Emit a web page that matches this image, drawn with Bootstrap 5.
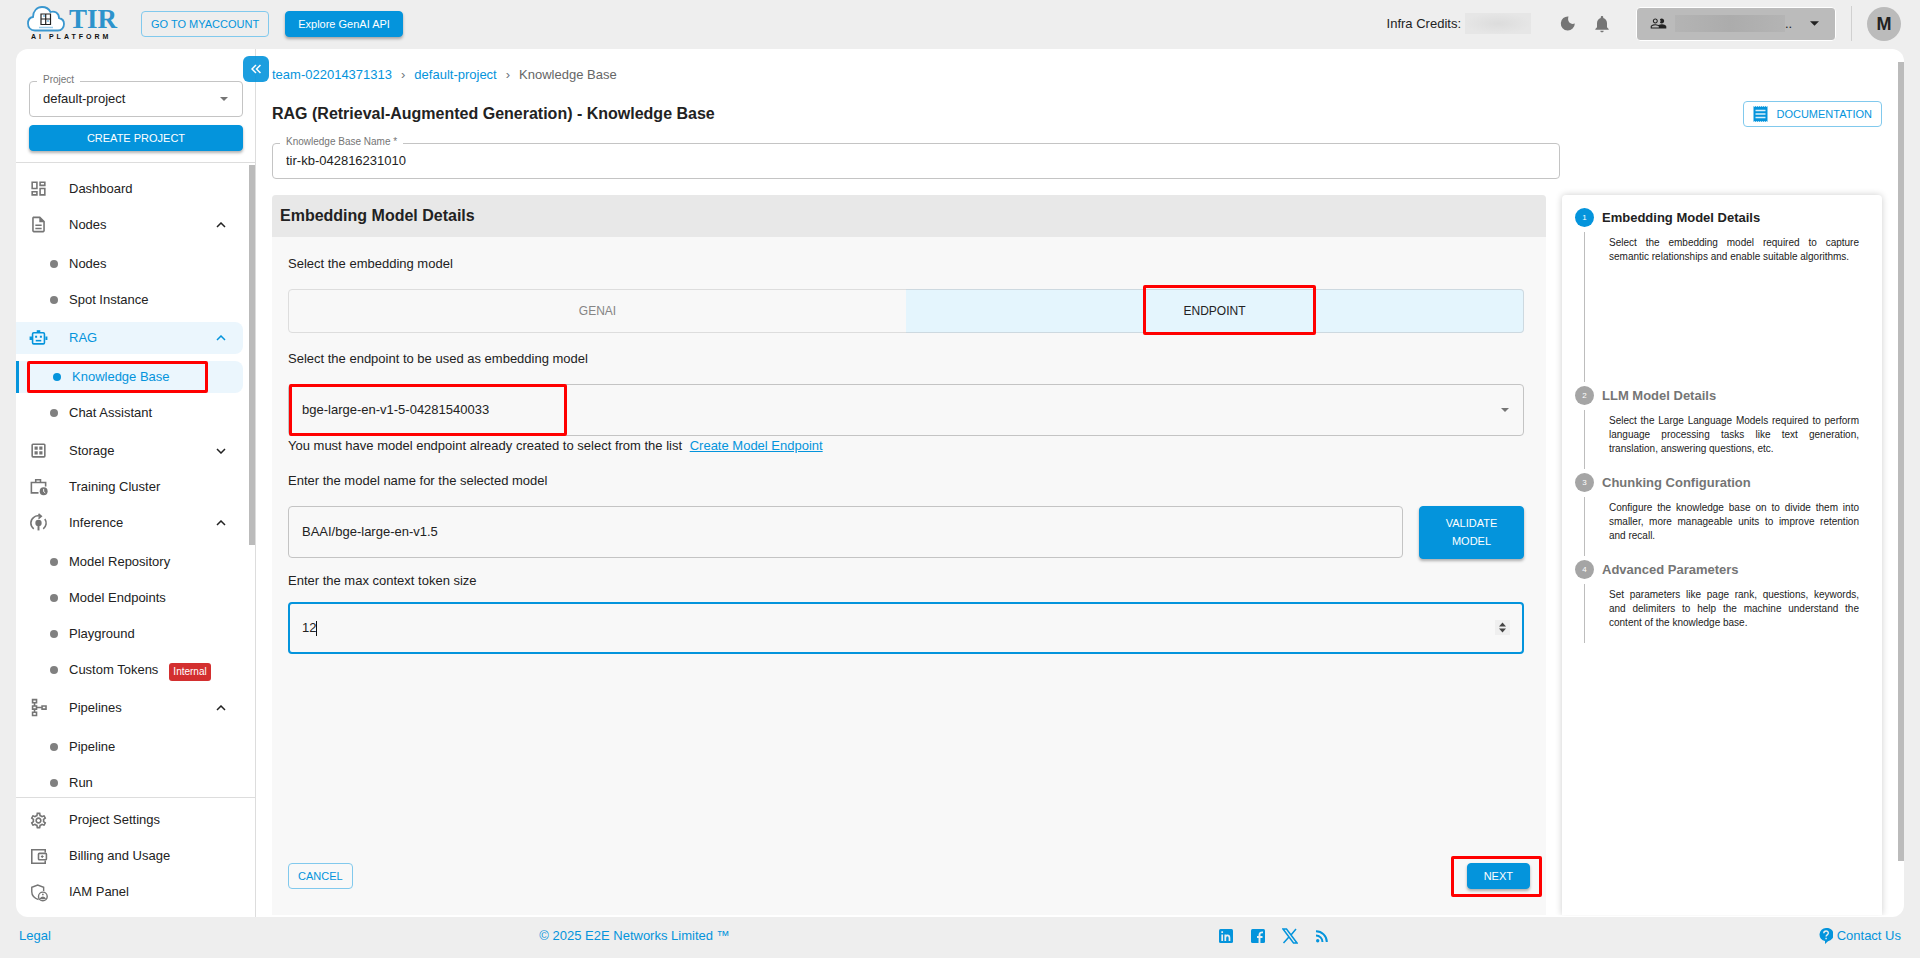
<!DOCTYPE html>
<html lang="en">
<head>
<meta charset="utf-8">
<meta name="viewport" content="width=device-width, initial-scale=1">
<title>TIR AI Platform - Knowledge Base</title>
<link href="https://cdn.jsdelivr.net/npm/bootstrap@5.3.0/dist/css/bootstrap.min.css" rel="stylesheet">
<style>
:root{--brand:#0494dc;--ink:#222;--line:#c4c4c4;--muted:#757575}
body{font-family:"Liberation Sans",Arial,sans-serif;font-size:13px;line-height:20px;color:var(--ink);background:#eee}
a{color:var(--brand);text-decoration:none}
svg{display:block;flex:none}
.topbar{height:49px;padding:0 19px 1px 27px}
.brandmark{width:88px;margin-right:26px}
.brand-name{font:700 27px/25px "Liberation Serif",serif;color:#2d93cc}
.brand-sub{font:700 7px/9px "Liberation Sans",sans-serif;color:#111;letter-spacing:3px;white-space:nowrap}
.btn{--bs-btn-font-size:11px;--bs-btn-line-height:18px;--bs-btn-border-radius:4px;--bs-btn-padding-y:3px}
.btn-brand{--bs-btn-color:#fff;--bs-btn-bg:var(--brand);--bs-btn-border-color:var(--brand);--bs-btn-hover-color:#fff;--bs-btn-hover-bg:#0380bf;box-shadow:0 2px 3px rgba(0,0,0,.3)}
.btn-line{--bs-btn-color:var(--brand);--bs-btn-border-color:#81c9ed;--bs-btn-hover-color:#fff;--bs-btn-hover-bg:var(--brand);--bs-btn-padding-x:9px}
.redacted{background:radial-gradient(closest-side,#dcdcdc,#e6e6e6);width:66px;height:21px}
.team-btn{width:200px;height:34px;background:#bbb;border:1px solid #fff;border-radius:4px;padding:0 16px 0 13px;color:#222}
.team-btn .hidden-name{width:110px;height:17px;background:linear-gradient(90deg,#b4b4b4,#acacac,#b4b4b4)}
.rule{width:1px;height:35px;background:#d0d0d0;margin:0 15px}
.avatar{width:34px;height:34px;background:#bbb;font-size:18px;font-weight:700}
.shell{margin:0 16px;background:#fff;border-radius:12px;overflow:hidden;min-height:0}
.side{width:240px;flex:none;border-right:1px solid #ddd}
.side-top{padding:32px 12px 11px 13px;border-bottom:1px solid #ddd}
.outlined{position:relative}
.outlined label{position:absolute;top:-7px;left:8px;padding:0 6px;background:#fff;font-size:10px;line-height:12px;color:var(--muted);z-index:1}
.form-control,.form-select{font-size:13px;line-height:20px;color:var(--ink);background-color:transparent;border:1px solid var(--line);border-radius:4px;padding:7px 13px;background-image:none;height:36px}
.caret{position:absolute;right:15px;top:50%;margin-top:-2px;pointer-events:none}
.tall .form-control,.tall .form-select,.form-control.tall{height:52px}
.tall{position:relative}
.navzone{position:relative;overflow:hidden;padding-top:8px}
.thumb{position:absolute;right:0;width:6px;background:#bbb}
.navlist{list-style:none;margin:0;padding:0}
.navlist li{display:flow-root}
.navlist .navlist{padding:3px 0 2px}
.navlist a{display:flex;align-items:center;height:32px;margin:2px 12px 2px 0;padding:0 17px 0 13px;color:var(--ink);border-radius:0 8px 8px 0}
.navlist a .ic{width:40px;color:#757575}
.navlist a .chev{margin-left:auto}
.navlist .navlist a::before{content:"";width:8px;height:8px;border-radius:50%;background:#808080;margin:0 11px 0 21px}
.navlist a.on,.navlist a.on .ic{color:var(--brand);background:#ebf6fd}
.navlist .navlist a.on::before{background:var(--brand)}
.navlist a.here{border-left:3px solid var(--brand);position:relative}
.tag{background:#d32f2f;color:#fff;font-size:10px;line-height:18px;border-radius:3px;padding:0 4px;margin:5px 0 0 11px}
.side-bottom{border-top:1px solid #ddd;padding:4px 0 7px}
.collapse-btn{position:absolute;left:227px;top:7px;width:26px;height:26px;border:0;border-radius:6px;background:var(--brand);opacity:.9;padding:0;z-index:3}
.mark-box{position:absolute;border:3px solid #f00;border-radius:2px;pointer-events:none}
.mainpane{position:relative;padding:16px 22px 2px 16px}
.crumb{gap:9px}
h1{font-size:16px;line-height:20px;font-weight:700;margin:0}
.kbname{width:80%}
.panel{background:#f8f8f8;border-radius:4px 4px 0 0}
.panel h2{font-size:16px;line-height:42px;font-weight:700;background:#e8e8e8;margin:0;padding:0 8px;border-radius:4px 4px 0 0}
.panel-body{padding:17px 16px 26px}
.panel-body>:not(.actions){margin-right:6px}
.fieldlabel,.hint{display:block;line-height:19px}
.fieldlabel{margin-bottom:16px}
.choice{height:44px;margin-bottom:16px}
.choice .btn{--bs-btn-font-size:12px;--bs-btn-border-color:#ddd;--bs-btn-color:#858585;flex:1 1 0;line-height:20px;padding:8px}
.choice .btn.picked{background:#e4f5fd;color:#222;border-color:#cdd9e0;border-left:0;position:relative}
.validate{width:105px;height:53px}
.form-control.focused{border:2px solid var(--brand);padding-left:12px;appearance:textfield;-moz-appearance:textfield}
.focused::-webkit-inner-spin-button{display:none}
.textcaret{position:absolute;left:28px;top:19px;width:1px;height:15px;background:#111}
.spin{position:absolute;right:14px;top:18px;background:#efefef}
.steps{width:320px;flex:none;border-radius:4px 4px 0 0;box-shadow:0 0 7px rgba(0,0,0,.2);padding:13px 23px 0 13px;clip-path:inset(-8px -8px 0 -8px)}
.stepitem{display:grid;grid-template-columns:19px 1fr;column-gap:8px}
.stepitem h3{font-size:13px;line-height:19px;font-weight:700;margin:0;color:var(--muted)}
.stepitem .num{width:19px;height:19px;border-radius:50%;background:#a5a5a5;color:#fff;font-size:8px;line-height:19px;text-align:center}
.stepitem .bar{width:1px;background:#bdbdbd;margin:5px auto 4px 9px}
.stepitem p{font-size:10px;line-height:14px;margin:9px 0 17px;padding-left:7px;text-align:justify}
.stepitem.active h3{color:var(--ink)}
.stepitem.active .num{background:var(--brand)}
.stepitem.active .bar{min-height:150px}
footer{height:41px;padding:0 19px 4px}
</style>
</head>
<body>
<svg width="0" height="0" class="position-absolute" aria-hidden="true">
  <symbol id="up" viewBox="0 0 10 6"><path d="M1 5 5 1l4 4" fill="none" stroke="currentColor" stroke-width="1.5"/></symbol>
  <symbol id="down" viewBox="0 0 10 6"><path d="m1 1 4 4 4-4" fill="none" stroke="currentColor" stroke-width="1.5"/></symbol>
  <symbol id="tri" viewBox="0 0 8 4"><path d="M0 0h8L4 4z" fill="currentColor"/></symbol>
</svg>
<div class="d-flex flex-column vh-100">
<header class="topbar d-flex align-items-center">
  <a href="#" class="brandmark d-block" aria-label="TIR AI Platform">
    <span class="d-flex align-items-center">
      <svg width="38" height="26" viewBox="0 0 38 26"><path d="M8 24.500C3.500 24.500 1 21.500 1 17.500c0-3.500 2-6 5-6.500C6 5 10 1 15 1c4 0 7 2 8.500 5 4-1.500 8.500 1 8.500 6 3.500.8 5 3 5 6 0 3.500-2.500 6.500-6 6.500z" fill="#fff" stroke="#3a97cf" stroke-width="1.800"/><path d="M14 8h9.500v10.500H14zM18.700 8v10.500M14 13h9.500" fill="none" stroke="#222" stroke-width="1.200"/><path d="M16 10h2M20 15h2" stroke="#3a97cf"/><path d="M12 21.500h14" stroke="#9ccbe8" stroke-width="1.500"/></svg>
      <span class="brand-name ms-1">TIR</span>
    </span>
    <span class="brand-sub d-block ps-1">AI PLATFORM</span>
  </a>
  <button type="button" class="btn btn-line me-3">GO TO MYACCOUNT</button>
  <button type="button" class="btn btn-brand">Explore GenAI API</button>
  <div class="ms-auto d-flex align-items-center">
    <span class="me-1">Infra Credits:</span><span class="redacted me-4"></span>
    <button type="button" class="btn p-0 border-0 ms-1" aria-label="Dark mode"><svg width="17" height="17" viewBox="0 0 17 17"><path d="M9.500 1.500A7 7 0 1 0 15.800 8.500c-4 1.800-8-2-6.300-7z" fill="#757575"/></svg></button>
    <button type="button" class="btn p-0 border-0 ms-3" aria-label="Notifications"><svg width="20" height="20" viewBox="0 0 24 24"><path fill="#757575" d="M12 22c1.100 0 2-.9 2-2h-4c0 1.100.9 2 2 2zm6-6v-5c0-3.070-1.630-5.640-4.500-6.320V4c0-.83-.67-1.500-1.500-1.500s-1.500.67-1.500 1.500v.68C7.640 5.360 6 7.920 6 11v5l-2 2v1h16v-1z"/></svg></button>
    <button type="button" class="team-btn d-flex align-items-center ms-4" aria-label="Team"><svg width="17" height="17" viewBox="0 0 24 24"><path fill="currentColor" d="M16.500 13c-1.200 0-3.070.34-4.500 1-1.430-.67-3.300-1-4.500-1C5.330 13 1 14.080 1 16.250V19h22v-2.750c0-2.170-4.330-3.250-6.500-3.250zm-4 4.500h-10v-1.250c0-.54 2.560-1.750 5-1.750s5 1.210 5 1.750zM7.500 12c1.930 0 3.500-1.570 3.500-3.500S9.430 5 7.500 5 4 6.570 4 8.500 5.570 12 7.500 12zm0-5.500c1.100 0 2 .9 2 2s-.9 2-2 2-2-.9-2-2 .9-2 2-2zM16.500 12c1.930 0 3.500-1.570 3.500-3.500S18.430 5 16.500 5c-1 0-1.600.3-2.500.9 1.200 1.600 1.200 3.600 0 5.200.9.600 1.500.9 2.500.9z"/></svg><span class="hidden-name ms-2"></span><span>..</span><svg class="ms-auto" width="9" height="5"><use href="#tri"/></svg></button>
    <span class="rule"></span>
    <span class="avatar rounded-circle d-flex align-items-center justify-content-center">M</span>
  </div>
</header>

<div class="shell d-flex flex-grow-1 position-relative">
  <aside class="side d-flex flex-column">
    <div class="side-top">
      <div class="outlined mb-2">
        <label for="project">Project</label>
        <select id="project" class="form-select"><option>default-project</option></select>
        <svg class="caret" width="8" height="4" color="#757575"><use href="#tri"/></svg>
      </div>
      <button type="button" class="btn btn-brand w-100">CREATE PROJECT</button>
    </div>
    <nav class="navzone flex-grow-1" aria-label="Project">
      <ul class="navlist">
        <li><a href="#"><span class="ic"><svg width="19" height="19" viewBox="0 0 24 24" fill="currentColor"><path d="M19 5v2h-4V5h4M9 5v6H5V5h4m10 8v6h-4v-6h4M9 17v2H5v-2h4M21 3h-8v6h8V3zM11 3H3v10h8V3zm10 8h-8v10h8V11zm-10 4H3v6h8v-6z"/></svg></span>Dashboard</a></li>
        <li><a href="#"><span class="ic"><svg width="19" height="19" viewBox="0 0 24 24" fill="currentColor"><path d="M8 16h8v2H8zm0-4h8v2H8zm6-10H6c-1.100 0-2 .9-2 2v16c0 1.100.89 2 1.990 2H18c1.100 0 2-.9 2-2V8zm4 18H6V4h7v5h5z"/></svg></span>Nodes<svg class="chev" width="10" height="6"><use href="#up"/></svg></a>
          <ul class="navlist">
            <li><a href="#">Nodes</a></li>
            <li><a href="#">Spot Instance</a></li>
          </ul></li>
        <li><a href="#" class="on"><span class="ic"><svg width="19" height="19" viewBox="0 0 24 24" fill="none" stroke="currentColor" stroke-width="2"><rect x="4.500" y="6" width="15" height="14" rx="1.500"/><path d="M8.500 16h7"/><path d="M8.500 10.500h1v1h-1zm6 0h1v1h-1zM1.500 11.500h1.500v3H1.500zm20 0h1v3h-1zM10.500 3.500h3V5h-3z" stroke-width="1.500" fill="currentColor"/></svg></span>RAG<svg class="chev" width="10" height="6"><use href="#up"/></svg></a>
          <ul class="navlist">
            <li><a href="#" class="on here">Knowledge Base<span class="mark-box" style="left:8px;top:0;width:181px;height:32px"></span></a></li>
            <li><a href="#">Chat Assistant</a></li>
          </ul></li>
        <li><a href="#"><span class="ic"><svg width="19" height="19" viewBox="0 0 24 24" fill="currentColor"><path d="M19 3H5a2 2 0 0 0-2 2v14a2 2 0 0 0 2 2h14a2 2 0 0 0 2-2V5a2 2 0 0 0-2-2zm0 16H5V5h14zM7 7h4v4H7zm6 0h4v4h-4zm-6 6h4v4H7zm6 0h4v4h-4z"/></svg></span>Storage<svg class="chev" width="10" height="6"><use href="#down"/></svg></a></li>
        <li><a href="#"><span class="ic"><svg width="19" height="19" viewBox="0 0 24 24"><path d="M12 20H3V7h18v5M8.500 7V3.500h6V7" fill="none" stroke="currentColor" stroke-width="2"/><circle cx="18.500" cy="18" r="5" fill="currentColor"/><path d="M18.500 15v3.500l2 1.500" fill="none" stroke="#fff" stroke-width="1.200"/></svg></span>Training Cluster</a></li>
        <li><a href="#"><span class="ic"><svg width="19" height="19" viewBox="0 0 24 24" fill="none" stroke="currentColor" stroke-width="2"><path d="M6 20a9 9 0 0 1 0-14.500A8 8 0 0 1 14 4M18 20a9 9 0 0 0 2-12.500M12 1l3.500 3L12 7"/><circle cx="12" cy="12.500" r="3" fill="currentColor"/><path d="M12 15v7" stroke-width="2.500"/></svg></span>Inference<svg class="chev" width="10" height="6"><use href="#up"/></svg></a>
          <ul class="navlist">
            <li><a href="#">Model Repository</a></li>
            <li><a href="#">Model Endpoints</a></li>
            <li><a href="#">Playground</a></li>
            <li><a href="#">Custom Tokens<span class="tag">Internal</span></a></li>
          </ul></li>
        <li><a href="#"><span class="ic"><svg width="19" height="19" viewBox="0 0 24 24" fill="none" stroke="currentColor" stroke-width="2"><path d="M4.500 2h5v4h-5zM4.500 10h5v4h-5zM4.500 18h5v4h-5zM16.500 10h5v4h-5zM7 6v4M7 14v4M9.500 12h7"/></svg></span>Pipelines<svg class="chev" width="10" height="6"><use href="#up"/></svg></a>
          <ul class="navlist">
            <li><a href="#">Pipeline</a></li>
            <li><a href="#">Run</a></li>
          </ul></li>
      </ul>
      <span class="thumb" style="top:2px;height:60%"></span>
    </nav>
    <ul class="navlist side-bottom">
      <li><a href="#"><span class="ic"><svg width="19" height="19" viewBox="0 0 24 24" fill="currentColor"><path d="M19.430 12.980c.04-.32.07-.64.07-.98s-.03-.66-.07-.98l2.110-1.650c.19-.15.24-.42.12-.64l-2-3.460c-.09-.16-.26-.25-.44-.25-.06 0-.12.010-.17.030l-2.490 1c-.52-.4-1.080-.73-1.690-.98l-.38-2.650C14.460 2.180 14.250 2 14 2h-4c-.25 0-.46.18-.49.42l-.38 2.650c-.61.25-1.170.59-1.690.98l-2.490-1c-.06-.02-.12-.03-.18-.03-.17 0-.34.09-.43.25l-2 3.460c-.13.22-.07.49.12.64l2.110 1.650c-.04.32-.07.65-.07.98s.03.66.07.98l-2.110 1.650c-.19.15-.24.42-.12.64l2 3.460c.09.16.26.25.44.25.06 0 .12-.01.17-.03l2.490-1c.52.4 1.080.73 1.690.98l.38 2.650c.03.24.24.42.49.42h4c.25 0 .46-.18.49-.42l.38-2.650c.61-.25 1.170-.59 1.690-.98l2.490 1c.06.02.12.03.18.03.17 0 .34-.09.43-.25l2-3.460c.12-.22.07-.49-.12-.64zm-1.980-1.710c.04.31.05.52.05.73s-.02.43-.05.73l-.14 1.130.89.7 1.080.84-.7 1.210-1.270-.51-1.040-.42-.9.680c-.43.32-.84.56-1.250.73l-1.060.43-.16 1.130-.2 1.350h-1.400l-.19-1.350-.16-1.130-1.060-.43c-.43-.18-.83-.41-1.230-.71l-.91-.7-1.060.43-1.270.51-.7-1.210 1.080-.84.89-.7-.14-1.130c-.03-.31-.05-.54-.05-.74s.02-.43.05-.73l.14-1.130-.89-.7-1.080-.84.7-1.210 1.270.51 1.040.42.9-.68c.43-.32.84-.56 1.250-.73l1.060-.43.16-1.130.2-1.350h1.390l.19 1.350.16 1.130 1.060.43c.43.18.83.41 1.230.71l.91.7 1.060-.43 1.270-.51.7 1.210-1.070.85-.89.7zM12 8c-2.210 0-4 1.790-4 4s1.790 4 4 4 4-1.790 4-4-1.790-4-4-4zm0 6c-1.100 0-2-.9-2-2s.9-2 2-2 2 .9 2 2-.9 2-2 2z"/></svg></span>Project Settings</a></li>
      <li><a href="#"><span class="ic"><svg width="19" height="19" viewBox="0 0 24 24" fill="none" stroke="currentColor" stroke-width="2"><path d="M20.500 7V3.500h-17v17h17V17"/><rect x="12" y="8" width="10" height="8" rx="1"/><path d="M15 12h3.500M16.700 10.300v3.500" stroke-width="1.500"/></svg></span>Billing and Usage</a></li>
      <li><a href="#"><span class="ic"><svg width="19" height="19" viewBox="0 0 24 24" fill="none" stroke="currentColor" stroke-width="1.800"><path d="M12 21C6.500 19 3.500 15.500 3.500 11V5.500L11 2.500l7.500 3V10"/><circle cx="17.500" cy="17" r="5.500"/><path d="M17.500 13.500v2M15 19.500c1-2 4-2 5 0z" stroke-width="2"/></svg></span>IAM Panel</a></li>
    </ul>
  </aside>
  <button type="button" class="collapse-btn d-flex align-items-center justify-content-center" aria-label="Collapse sidebar"><svg width="10" height="10" viewBox="0 0 10 10"><path d="M5 1 1 5l4 4M9.500 1l-4 4 4 4" fill="none" stroke="#fff" stroke-width="1.500"/></svg></button>

  <main class="mainpane flex-grow-1 d-flex flex-column">
    <nav class="crumb d-flex" aria-label="Breadcrumb">
      <a href="#">team-022014371313</a><span class="text-secondary">›</span><a href="#">default-project</a><span class="text-secondary">›</span><span style="color:#666">Knowledge Base</span>
    </nav>
    <div class="d-flex justify-content-between align-items-center my-3">
      <h1>RAG (Retrieval-Augmented Generation) - Knowledge Base</h1>
      <button type="button" class="btn btn-line d-flex align-items-center gap-2"><svg width="15" height="16" viewBox="0 0 14 16"><path d="M0 0l1 1 1-1 1 1 1-1 1 1 1-1 1 1 1-1 1 1 1-1 1 1 1-1 1 1 1-1v16l-1-1-1 1-1-1-1 1-1-1-1 1-1-1-1 1-1-1-1 1-1-1-1 1-1-1-1 1z" fill="#0494dc"/><path d="M2 4.500h10M2 8h10M2 11.500h10" stroke="#d9effa" stroke-width="1.600"/></svg>DOCUMENTATION</button>
    </div>
    <div class="outlined kbname mb-3">
      <label for="kbname">Knowledge Base Name *</label>
      <input id="kbname" type="text" class="form-control" value="tir-kb-042816231010">
    </div>
    <div class="d-flex gap-3 flex-grow-1">
      <section class="panel flex-grow-1 d-flex flex-column">
        <h2>Embedding Model Details</h2>
        <form class="panel-body d-flex flex-column flex-grow-1">
          <span class="fieldlabel">Select the embedding model</span>
          <div class="btn-group choice" role="group" aria-label="Embedding model source">
            <button type="button" class="btn">GENAI</button>
            <button type="button" class="btn picked">ENDPOINT<span class="mark-box" style="left:calc(50% - 72px);top:-5px;width:173px;height:50px"></span></button>
          </div>
          <label class="fieldlabel" for="endpoint">Select the endpoint to be used as embedding model</label>
          <div class="tall">
            <select id="endpoint" class="form-select"><option>bge-large-en-v1-5-04281540033</option></select>
            <svg class="caret" width="8" height="4" color="#757575"><use href="#tri"/></svg>
            <span class="mark-box" style="left:1px;top:0;width:278px;height:52px"></span>
          </div>
          <div class="hint mb-3">You must have model endpoint already created to select from the list <a href="#" class="text-decoration-underline ms-1">Create Model Endpoint</a></div>
          <label class="fieldlabel" for="modelname">Enter the model name for the selected model</label>
          <div class="d-flex gap-3">
            <input id="modelname" type="text" class="form-control tall" value="BAAI/bge-large-en-v1.5">
            <button type="button" class="btn btn-brand validate flex-shrink-0 px-4">VALIDATE MODEL</button>
          </div>
          <label class="fieldlabel mt-2 pt-1 mb-2 pb-1" for="tokens">Enter the max context token size</label>
          <div class="tall">
            <input id="tokens" type="number" class="form-control focused" value="12">
            <span class="textcaret"></span>
            <svg class="spin" width="15" height="15" viewBox="0 0 15 15"><path d="M4 6.500h7L7.500 2.500zM4 8.500h7l-3.500 4z" fill="#444"/></svg>
          </div>
          <div class="actions d-flex justify-content-between mt-auto">
            <button type="button" class="btn btn-line">CANCEL</button>
            <span class="position-relative">
              <button type="submit" class="btn btn-brand px-3">NEXT</button>
              <span class="mark-box" style="inset:-7px -12px -8px -16px"></span>
            </span>
          </div>
        </form>
      </section>
      <aside class="steps">
        <div class="stepitem active"><span class="num">1</span><h3>Embedding Model Details</h3><span class="bar"></span><p>Select the embedding model required to capture semantic relationships and enable suitable algorithms.</p></div>
        <div class="stepitem"><span class="num">2</span><h3>LLM Model Details</h3><span class="bar"></span><p>Select the Large Language Models required to perform language processing tasks like text generation, translation, answering questions, etc.</p></div>
        <div class="stepitem"><span class="num">3</span><h3>Chunking Configuration</h3><span class="bar"></span><p>Configure the knowledge base on to divide them into smaller, more manageable units to improve retention and recall.</p></div>
        <div class="stepitem"><span class="num">4</span><h3>Advanced Parameters</h3><span class="bar"></span><p>Set parameters like page rank, questions, keywords, and delimiters to help the machine understand the content of the knowledge base.</p></div>
      </aside>
    </div>
    <span class="thumb" style="top:13px;height:92%"></span>
  </main>
</div>

<footer class="d-flex align-items-center justify-content-between">
  <a href="#">Legal</a>
  <a href="#">© 2025 E2E Networks Limited ™</a>
  <div class="d-flex gap-3">
    <a href="#" aria-label="LinkedIn"><svg width="16" height="16" viewBox="0 0 16 16"><rect x="1" y="1" width="14" height="14" rx="1.500" fill="#0494dc"/><path d="M4.200 6.500V13M7.300 13V6.500M7.300 10c0-3.500 4.200-3.500 4.200 0v3M4.200 3.300v1.600" fill="none" stroke="#eee" stroke-width="1.700"/></svg></a>
    <a href="#" aria-label="Facebook"><svg width="16" height="16" viewBox="0 0 16 16"><rect x="1" y="1" width="14" height="14" rx="1.500" fill="#0494dc"/><path d="M9.500 15V7c0-2 .8-2.800 3.500-2.600M7 9h5.500" fill="none" stroke="#eee" stroke-width="1.900"/></svg></a>
    <a href="#" aria-label="X"><svg width="16" height="16" viewBox="0 0 16 16"><path d="M1 1h3.500l10.500 14h-3.500zM14 1 9 7M6.700 9.200 1.500 15" fill="none" stroke="#0494dc" stroke-width="1.500"/></svg></a>
    <a href="#" aria-label="RSS"><svg width="16" height="16" viewBox="0 0 16 16"><circle cx="3.700" cy="12.800" r="1.700" fill="#0494dc"/><path d="M2 7.500a6.500 6.500 0 0 1 6.500 6.500M2 3.200A10.800 10.800 0 0 1 12.800 14" fill="none" stroke="#0494dc" stroke-width="2"/></svg></a>
  </div>
  <a href="#" class="d-flex align-items-center gap-1"><svg width="14" height="16" viewBox="0 0 14 16"><path d="M7 0a6.600 6.600 0 0 0-1 13.100V16l3-2.800A6.600 6.600 0 0 0 7 0z" fill="#0494dc"/><path d="M4.800 5.200c.1-3 4.600-2.800 4.500 0C9.200 6.800 7.200 6.900 7.100 8.500M7.100 9.800v1.500" fill="none" stroke="#eee" stroke-width="1.400"/></svg>Contact Us</a>
</footer>
</div>
<script src="https://cdn.jsdelivr.net/npm/bootstrap@5.3.0/dist/js/bootstrap.bundle.min.js"></script>
</body>
</html>
